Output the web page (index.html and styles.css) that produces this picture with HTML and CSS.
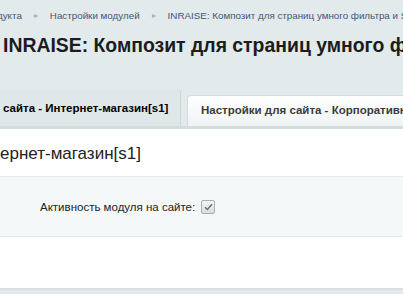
FILE: index.html
```html
<!DOCTYPE html>
<html lang="ru">
<head>
  <meta charset="UTF-8">
  <title>Настройки модулей</title>
  <link rel="stylesheet" href="styles.css">
</head>
<body>
  <div class="navchain">
    <span class="crumb first">дукта</span>
    <span class="arrow">&#9656;</span>
    <span class="crumb">Настройки модулей</span>
    <span class="arrow">&#9656;</span>
    <span class="crumb">INRAISE: Композит для страниц умного фильтра и SEO</span>
  </div>

  <h1 class="title">INRAISE: Композит для страниц умного фильтра и SEO</h1>

  <div class="tabs">
    <div class="tab active">сайта - Интернет-магазин[s1]</div>
    <div class="tab">Настройки для сайта - Корпоративный сайт</div>
  </div>

  <div class="panel">
    <div class="panel_head">ернет-магазин[s1]</div>
    <div class="row">
      <span class="label">Активность модуля на сайте:</span>
      <span class="checkbox">
        <svg width="9" height="8" viewBox="0 0 9 8"><path d="M1 4.2 L3.4 6.5 L8 1.2" fill="none" stroke="#66707a" stroke-width="1.5"/></svg>
      </span>
    </div>
    <div class="empty"></div>
  </div>
</body>
</html>
```

FILE: styles.css
```css
html, body {
  margin: 0;
  height: 100%;
  overflow: hidden;
}
body {
  background-color: #e3eaec;
  font-family: "Liberation Sans", Arial, sans-serif;
  color: #000;
}
.navchain {
  display: flex;
  align-items: center;
  gap: 12px;
  padding-top: 8px;
  height: 14px;
  font-size: 9.8px;
  white-space: nowrap;
  overflow: hidden;
}
.crumb {
  color: #3f5877;
}
.crumb.first {
  margin-left: -3px;
}
.arrow {
  color: #a7b3bb;
  font-size: 8px;
}
.title {
  margin: 0;
  padding: 12px 0 0 3px;
  height: 28px;
  font-size: 19.4px;
  font-weight: bold;
  color: #1c1c1c;
  white-space: nowrap;
  overflow: hidden;
}
.tabs {
  display: flex;
  align-items: flex-end;
  gap: 6px;
  margin-top: 28px;
  height: 36px;
  border-bottom: 3px solid #d4dcde;
  white-space: nowrap;
  overflow: hidden;
}
.tab {
  flex: none;
  height: 30px;
  line-height: 28px;
  padding: 0 0 0 13px;
  font-size: 11.5px;
  font-weight: bold;
  color: #3b3b3b;
  background: linear-gradient(#ffffff, #f0f3f4);
  border: 1px solid #d2dadc;
  border-bottom: none;
  border-radius: 4px 4px 0 0;
}
.tab.active {
  height: 36px;
  line-height: 36px;
  width: 177px;
  padding-left: 3px;
  color: #000;
  background: #dfe7e9;
  border-color: #cdd6d8;
  border-left: none;
  border-radius: 0 4px 0 0;
}
.panel {
  background: #fff;
}
.panel_head {
  height: 47px;
  line-height: 50px;
  font-size: 17px;
  color: #222;
  border-bottom: 1px solid #e4eaeb;
  white-space: nowrap;
}
.row {
  display: flex;
  align-items: center;
  gap: 6px;
  height: 59px;
  padding-left: 40px;
  background: #f5f8f9;
  border-bottom: 1px solid #e6ebec;
}
.label {
  font-size: 11.5px;
  color: #222;
}
.checkbox {
  display: flex;
  align-items: center;
  justify-content: center;
  width: 12px;
  height: 12px;
  border: 1px solid #a7afb5;
  border-radius: 2px;
  background: linear-gradient(#f4f5f6, #d9dde0);
}
.empty {
  height: 51px;
  border-bottom: 2px solid #d8e0e2;
}
```
